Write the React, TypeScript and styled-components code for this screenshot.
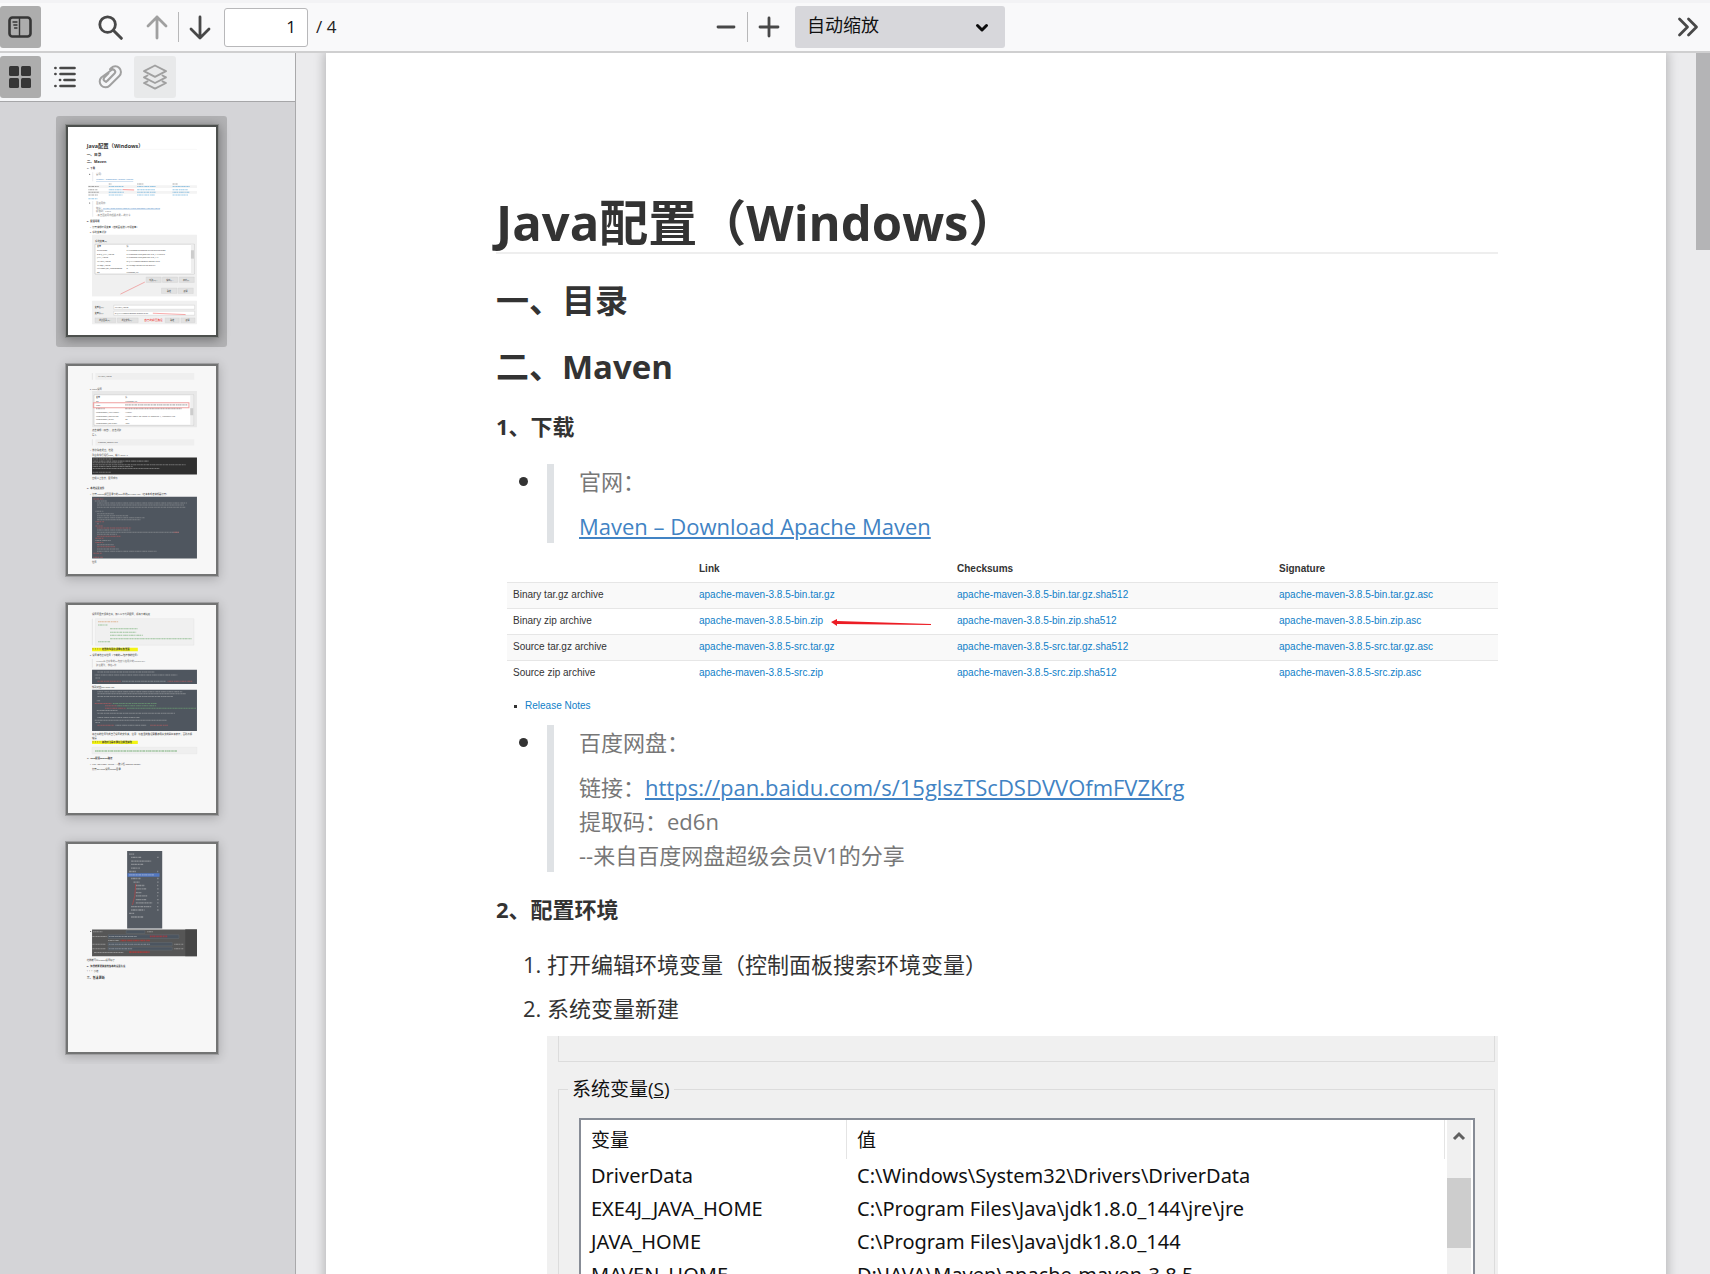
import React from "react";
import styled, { createGlobalStyle } from "styled-components";

const GlobalStyle = createGlobalStyle`
  *, *::before, *::after { box-sizing: border-box; }
  body {
    margin: 0;
    overflow: hidden;
    font-family: "Open Sans", "Noto Sans CJK SC", sans-serif;
    color: #333;
  }
  button, input, select { font: inherit; color: inherit; }
`;

/* ---------- shell ---------- */

const Shell = styled.div`
  display: flex;
  flex-direction: column;
  height: 100vh;
  background: #ebebed;
`;

const Toolbar = styled.header`
  display: grid;
  grid-template-columns: 1fr auto 1fr;
  align-items: center;
  flex: none;
  height: 53px;
  background: #f9f9fa;
  border-top: 3px solid #f3f3f5;
  border-bottom: 2px solid #cfcfd0;
`;

const ToolGroup = styled.div<{ $end?: boolean }>`
  display: flex;
  align-items: center;
  justify-content: ${(p) => (p.$end ? "flex-end" : "flex-start")};
  padding-right: ${(p) => (p.$end ? 1 : 0)}px;
`;

const IconButton = styled.button<{ $tone?: "on" | "hover"; $dim?: boolean }>`
  display: flex;
  align-items: center;
  justify-content: center;
  width: ${(p) => (p.$tone === "on" ? 41 : 42)}px;
  height: 42px;
  padding: 0 ${(p) => (p.$tone === "on" ? 2 : 0)}px 0 0;
  border: 0;
  border-radius: 3px;
  color: ${(p) => (p.$dim ? "#a0a0a0" : p.$tone === "on" ? "#363636" : "#484848")};
  background: ${(p) =>
    p.$tone === "on" ? "#adadad" : p.$tone === "hover" ? "#e8e9ea" : "transparent"};
`;

const Gap = styled.span<{ $w: number }>`
  width: ${(p) => p.$w}px;
`;

const Divider = styled.span`
  width: 1px;
  height: 30px;
  background: #b8b8b9;
`;

const PageField = styled.input`
  width: 84px;
  height: 39px;
  margin-left: 3px;
  padding: 0 11px 2px;
  border: 1px solid #b8b8ba;
  border-radius: 3px;
  background: #fff;
  color: #111;
  font-size: 17px;
  text-align: right;
`;

const PageTotal = styled.span`
  margin-left: 8px;
  padding-bottom: 2px;
  font-size: 17px;
  color: #222;
`;

const SelectWrap = styled.div`
  position: relative;
  margin-left: 5px;
  svg {
    position: absolute;
    right: 16px;
    top: 17px;
    pointer-events: none;
  }
`;

const ZoomSelect = styled.select`
  display: block;
  appearance: none;
  width: 210px;
  height: 42px;
  padding: 0 12px 4px;
  border: 0;
  border-radius: 3px;
  background: #d7d7db;
  color: #111;
  font-size: 18px;
`;

const Body = styled.div`
  display: flex;
  flex: 1;
  min-height: 0;
`;

/* ---------- sidebar ---------- */

const Sidebar = styled.aside`
  display: flex;
  flex-direction: column;
  flex: none;
  width: 296px;
  border-right: 1px solid #a9a9ab;
  background: #d4d4d7;
`;

const SideTabs = styled.nav`
  display: flex;
  align-items: center;
  gap: 3px;
  flex: none;
  height: 49px;
  border-bottom: 1px solid #a6a6a8;
  background: #f5f6f8;
`;

const ThumbList = styled.div`
  display: flex;
  flex-direction: column;
  align-items: center;
  gap: 8px;
  padding: 14px 12px 0 0;
  overflow: hidden;
`;

const Thumb = styled.button<{ $active?: boolean }>`
  flex: none;
  width: 171px;
  height: 231px;
  padding: 8px 8px 9px 9px;
  border: 0;
  border-radius: 3px;
  background: ${(p) => (p.$active ? "#b2b2b4" : "transparent")};
  svg {
    display: block;
    width: 100%;
    height: 100%;
    border: 3px solid ${(p) => (p.$active ? "#4d504e" : "#737474")};
    outline: 1px solid ${(p) => (p.$active ? "#888a89" : "#a0a0a2")};
    outline-offset: -1px;
    background: ${(p) => (p.$active ? "#fff" : "#f7f7f7")};
    box-shadow: 0 2px 10px ${(p) => (p.$active ? "rgba(0,0,0,.35)" : "rgba(0,0,0,.2)")};
  }
`;

/* ---------- document ---------- */

const Viewer = styled.main`
  flex: 1;
  min-width: 0;
  padding: 0 30px;
  overflow: hidden;
`;

const ScrollTrack = styled.div`
  flex: none;
  width: 14px;
  background: #ebebed;
`;

const ScrollThumb = styled.div`
  height: 197px;
  background: #b4b4b6;
`;

const Page = styled.article`
  padding: 139px 168px 0 170px;
  background: #fff;
  box-shadow: 0 0 10px 2px rgba(0, 0, 0, 0.22);
  font-size: 22px;
  line-height: 34px;
`;

const Title = styled.h1`
  margin: 0 0 27px;
  border-bottom: 2px solid #eee;
  font-size: 49px;
  line-height: 60px;
`;

const Heading = styled.h2`
  margin: 26px 0 22px;
  font-size: 33px;
  line-height: 40px;
`;

const SubHeading = styled.h3`
  margin: 20px 0 21px;
  font-size: 22px;
  line-height: 34px;
`;

const Bullets = styled.ul`
  margin: 0;
  padding: 0 0 0 23px;
  list-style: none;
`;

const Bullet = styled.li`
  display: flex;
  gap: 19px;
  &::before {
    content: "";
    flex: none;
    width: 9px;
    height: 9px;
    margin-top: 13px;
    border-radius: 50%;
    background: #333;
  }
`;

const Quote = styled.blockquote`
  display: flex;
  flex-direction: column;
  gap: 11px;
  margin: 0;
  padding-left: 25px;
  border-left: 7px solid #dfe2e5;
  color: #777;
`;

const Para = styled.p`
  margin: 0;
`;

const DocLink = styled.a`
  color: #4183c4;
`;

const Downloads = styled.figure`
  height: 153px;
  margin: 13px 0 16px 11px;
  overflow: hidden;
  position: relative;
  font-family: "Liberation Sans", Arial, sans-serif;
  font-size: 10px;
  line-height: 16px;
`;

const DownloadTable = styled.table`
  width: 100%;
  table-layout: fixed;
  border-collapse: collapse;
  tr { height: 26px; }
  th, td { padding: 0 6px; text-align: left; white-space: nowrap; }
  tbody tr { border-top: 1px solid #e6e6e6; }
  tbody tr:nth-child(odd) { background: #f9f9f9; }
  a { color: #0f80c8; text-decoration: none; }
`;

const Col = styled.col<{ $w?: number }>`
  width: ${(p) => (p.$w ? `${p.$w}px` : "auto")};
`;

const Arrow = styled.svg`
  position: absolute;
  left: 323px;
  top: 60px;
`;

const Notes = styled.ul`
  display: flex;
  align-items: center;
  gap: 8px;
  margin: 12px 0 0;
  padding: 0 0 0 7px;
  list-style: none;
  a { color: #0f80c8; text-decoration: none; }
  &::before {
    content: "";
    width: 3px;
    height: 3px;
    background: #333;
  }
`;

const Steps = styled.ol`
  margin: 0;
  padding-left: 51px;
  li + li { margin-top: 10px; }
`;

/* ---------- environment variable dialog ---------- */

const Dialog = styled.div`
  margin-top: 11px;
  padding: 0 3px 0 11px;
  background: #f0f0f0;
  color: #111;
  font-size: 19px;
  line-height: 26px;
`;

const UpperBox = styled.div`
  height: 26px;
  border: 1px solid #dcdcdc;
  border-top: 0;
`;

const Group = styled.fieldset`
  min-width: 0;
  margin: 14px 0 0;
  padding: 16px 19px 60px 20px;
  border: 1px solid #dcdcdc;
  legend { margin-left: -11px; padding: 0 4px; }
`;

const ListBox = styled.div`
  display: flex;
  border: 2px solid #878c96;
  background: #fff;
`;

const VarTable = styled.table`
  flex: 1;
  table-layout: fixed;
  border-collapse: collapse;
  font-family: "Noto Sans", "Noto Sans CJK SC", sans-serif;
  th { height: 39px; font-size: 19px; font-weight: 400; box-shadow: inset -1px 0 #e4e4e4; }
  th, td { padding: 0 10px; text-align: left; white-space: nowrap; }
  td { height: 33px; font-size: 20px; }
`;

const InnerScroll = styled.div`
  display: flex;
  flex-direction: column;
  align-items: center;
  flex: none;
  width: 24px;
  margin: 0 2px;
  background: #f0f0f0;
  svg { margin: 10px 0 36px; }
`;

const InnerThumb = styled.div`
  width: 100%;
  height: 70px;
  background: #cdcdcd;
`;

/* ---------- icons ---------- */

const stroke = {
  fill: "none",
  stroke: "currentColor",
  strokeLinecap: "round" as const,
  strokeLinejoin: "round" as const,
};

const SidebarIcon = () => (
  <svg width="24" height="22" viewBox="0 0 24 22" {...stroke}>
    <rect x="1.5" y="1.5" width="21" height="19" rx="3" strokeWidth="2.6" />
    <path d="M11.5 2v18" strokeWidth="1.4" />
    <path d="M5 6h4M5.8 9h3.2M6.6 12H9" strokeWidth="1.3" />
  </svg>
);
const SearchIcon = () => (
  <svg width="25" height="25" viewBox="0 0 25 25" {...stroke}>
    <circle cx="9.6" cy="9.6" r="7.8" strokeWidth="2.8" />
    <path d="M15.5 15.5l7.8 7.8" strokeWidth="3" />
  </svg>
);
const ArrowIcon = ({ up }: { up?: boolean }) => (
  <svg width="22" height="25" viewBox="0 0 22 25" {...stroke} strokeWidth="2.8">
    <path d={up ? "M11 23V2M2 11l9-9 9 9" : "M11 2v21M2 14l9 9 9-9"} />
  </svg>
);
const MinusIcon = () => (
  <svg width="22" height="22" viewBox="0 0 22 22" {...stroke} strokeWidth="2.8">
    <path d="M3 11h16" />
  </svg>
);
const PlusIcon = () => (
  <svg width="22" height="22" viewBox="0 0 22 22" {...stroke} strokeWidth="2.8">
    <path d="M2 11h18M11 2v18" />
  </svg>
);
const MoreIcon = () => (
  <svg width="22" height="20" viewBox="0 0 22 20" {...stroke} strokeWidth="2.8">
    <path d="M2.5 2l8 8-8 8M11.5 2l8 8-8 8" />
  </svg>
);
const CaretIcon = () => (
  <svg width="14" height="10" viewBox="0 0 14 10" fill="none" stroke="#0c0c0d" strokeWidth="3" strokeLinecap="round" strokeLinejoin="round">
    <path d="M2.5 2.5L7 7l4.500-4.500" />
  </svg>
);
const GridIcon = () => (
  <svg width="22" height="22" viewBox="0 0 22 22" fill="currentColor">
    {[0, 12].map((x) => [0, 12].map((y) => <rect key={`${x}${y}`} x={x} y={y} width="10" height="10" rx="1.5" />))}
  </svg>
);
const OutlineIcon = () => (
  <svg width="22" height="22" viewBox="0 0 22 22" {...stroke} strokeWidth="2.7">
    <path d="M1.4 2h.1M6.5 2h14M1.4 8h.1M6.5 8h14M6 14h.1M10.5 14h10M1.4 20h.1M6.5 20h14" />
  </svg>
);
const ClipIcon = () => (
  <svg width="26" height="26" viewBox="0 0 26 26" {...stroke} strokeWidth="2">
    <path d="M9 18l8.500-8.500a2.300 2.300 0 0 0-3.300-3.300L4.300 13.500a5.800 5.800 0 0 0 8.200 8.200L22.300 12a5.600 5.600 0 0 0-8-8L13 5.300M17.500 9.500l-7 7.200a2.200 2.200 0 0 1-3.200-3.100l4.200-4.200" />
  </svg>
);
const LayersIcon = () => (
  <svg width="26" height="26" viewBox="0 0 26 26" {...stroke} strokeWidth="1.900">
    <path d="M13 1.500l11 5.700-11 5.700L2 7.200z" />
    <path d="M5.500 11.500L2 13.300 13 19l11-5.700-3.500-1.800" />
    <path d="M5.500 17.300L2 19l11 5.600L24 19l-3.500-1.700" />
  </svg>
);

/* ---------- thumbnail drawings ---------- */

type Line = [x: number, y: number, w: number, color?: string];

/* Greeked text: rows of short dashes standing for lines too small to read. */
const Greek = ({ lines, color, size = 4 }: { lines: Line[]; color: string; size?: number }) => (
  <g fill="none" strokeWidth={size}>
    {lines.map(([x, y, w, c], i) => (
      <path
        key={i}
        d={`M${x} ${y}h${w}`}
        stroke={c ?? color}
        strokeOpacity="0.42"
        strokeDasharray={["5 1 3 1 7 2", "3 1 8 1 4 2", "6 1 2 1 5 1"][i % 3]}
      />
    ))}
  </g>
);

const ThumbOne = () => (
  <svg viewBox="54 54 443 621" preserveAspectRatio="none" fill="#333" fontSize="7">
    <text x="110" y="116" fontSize="16" fontWeight="700">Java配置（Windows）</text>
    <path d="M110 121h330" stroke="#eee" />
    <text x="110" y="140" fontSize="11" fontWeight="700">一、目录</text>
    <text x="110" y="162" fontSize="11" fontWeight="700">二、Maven</text>
    <text x="110" y="180" fontWeight="700">1、下载</text>
    <circle cx="119" cy="195" r="1.5" />
    <path d="M128 189v27M128 275v47" stroke="#dfe2e5" strokeWidth="2" />
    <g fill="#777">
      <text x="138" y="197">官网：</text>
      <text x="138" y="213" fill="#4183c4" textDecoration="underline">Maven – Download Apache Maven</text>
      <text x="138" y="283">百度网盘：</text>
      <text x="138" y="298">链接：</text>
      <text x="159" y="298" fill="#4183c4" textDecoration="underline">https://pan.baidu.com/s/15glszTScDSDVVOfmFVZKrg</text>
      <text x="138" y="309">提取码：ed6n</text>
      <text x="138" y="319">--来自百度网盘超级会员V1的分享</text>
    </g>
    <circle cx="119" cy="281" r="1.5" />
    <path d="M114 228h326v8H114zM114 245h326v8H114z" fill="#f4f4f4" />
    <Greek size={3} color="#333" lines={[[176, 224, 8], [261, 224, 20], [367, 224, 16], [115, 232, 31], [115, 241, 27], [115, 249, 32], [115, 257, 28]]} />
    <Greek size={3} color="#0f80c8" lines={[[176, 232, 45], [176, 241, 41], [176, 249, 45], [176, 257, 41], [261, 232, 57], [261, 241, 53], [261, 249, 57], [261, 257, 53], [367, 232, 51], [367, 241, 46], [367, 249, 51], [367, 257, 46], [115, 268, 27]]} />
    <path d="M218 241l34 1" stroke="#e33" strokeWidth="1.5" />
    <text x="110" y="338" fontWeight="700">2、配置环境</text>
    <text x="119" y="355">1. 打开编辑环境变量（控制面板搜索环境变量）</text>
    <text x="119" y="370">2. 系统变量新建</text>
    <path d="M126 376h314v184H126z" fill="#f0f0f0" />
    <text x="135" y="397">系统变量(S)</text>
    <path d="M135 404h297v89H135z" fill="#fff" stroke="#999" />
    <path d="M422 405h9v88h-9z" fill="#eee" />
    <path d="M422 422h9v25h-9z" fill="#ccc" />
    <g fontSize="6">
      {[
        ["变量", "值"],
        ["DriverData", "C:\\Windows\\System32\\Drivers\\DriverData"],
        ["EXE4J_JAVA_HOME", "C:\\Program Files\\Java\\jdk1.8.0_144\\jre\\jre"],
        ["JAVA_HOME", "C:\\Program Files\\Java\\jdk1.8.0_144"],
        ["MAVEN_HOME", "D:\\JAVA\\Maven\\apache-maven-3.8.5"],
        ["MYSQL_HOME", "D:\\MySQL\\mysql-8.0.27-winx64"],
        ["NUMBER_OF_PROCESSORS", "8"],
        ["OS", "Windows_NT"],
      ].map(([k, v], i) => (
        <g key={k}>
          <text x="141" y={413 + i * 11}>{k}</text>
          <text x="229" y={413 + i * 11}>{v}</text>
        </g>
      ))}
      <path d="M288 502h45v16h-45zM337 502h45v16h-45zM387 502h45v16h-45zM334 535h46v16h-46zM384 535h45v16h-45z" fill="#e1e1e1" stroke="#ccc" />
      <text x="297" y="513">新建(W)...</text>
      <text x="348" y="513">编辑(I)...</text>
      <text x="398" y="513">删除(L)</text>
      <text x="350" y="546">确定</text>
      <text x="400" y="546">取消</text>
      <path d="M211 553l73-36" stroke="#e88" strokeWidth="2" />
      <path d="M126 561h314v12H126z" fill="#fff" />
      <path d="M126 573h314v70H126z" fill="#f0f0f0" />
      <path d="M191 586h242v12H191zM191 604h242v12H191z" fill="#fff" stroke="#bbb" />
      <text x="134" y="595">变量名(N):</text>
      <text x="194" y="595">MAVEN_HOME</text>
      <text x="134" y="613">变量值(V):</text>
      <text x="194" y="613">D:\JAVA\Maven\apache-maven-3.8.5</text>
      <path d="M308 610l98 4" stroke="#e55" strokeWidth="1.5" />
      <path d="M135 624h62v14h-62zM202 624h62v14h-62zM345 624h42v14h-42zM392 624h42v14h-42z" fill="#e1e1e1" stroke="#ccc" />
      <text x="147" y="634">浏览目录(D)...</text>
      <text x="214" y="634">浏览文件(F)...</text>
      <text x="360" y="634">确定</text>
      <text x="406" y="634">取消</text>
      <text x="282" y="632" fontSize="8" fill="#e22">自己的解压路径</text>
    </g>
  </svg>
);

const ThumbTwo = () => (
  <svg viewBox="54 33 443 621" preserveAspectRatio="none" fill="#444" fontSize="7">
    <path d="M136 54h296v20H136zM136 252h296v18H136z" fill="#efefef" />
    <path d="M127 54v20M127 252v18" stroke="#ddd" strokeWidth="2" />
    <text x="144" y="66" fontSize="6">MAVEN_HOME</text>
    <text x="119" y="104">3. path设置</text>
    <path d="M126 108h314v108H126z" fill="#e8e8e8" />
    <path d="M132 119h298v91H132z" fill="#fff" stroke="#aaa" />
    <path d="M420 119h9v91h-9z" fill="#eee" />
    <path d="M420 159h9v21h-9z" fill="#ccc" />
    <g fontSize="6">
      <text x="138" y="129">变量</text>
      <text x="225" y="129">值</text>
      <text x="138" y="140">OS</text>
      <text x="225" y="140">Windows_NT</text>
      <text x="138" y="151">Path</text>
      <text x="138" y="173">PROCESSOR_ARCHITECT...</text>
      <text x="225" y="173">AMD64</text>
      <text x="138" y="184">PROCESSOR_IDENTIFIER</text>
      <text x="225" y="184">AMD64 Family 23 Model 24 Stepping 1, AuthenticAMD</text>
      <text x="138" y="194">PROCESSOR_LEVEL</text>
      <text x="225" y="194">23</text>
      <text x="138" y="205">PROCESSOR_REVISION</text>
      <text x="225" y="205">1801</text>
    </g>
    <Greek color="#444" lines={[[225, 149, 186], [138, 160, 26], [225, 160, 170]]} />
    <path d="M130 143h286v15H130z" fill="none" stroke="#f0a0a0" strokeWidth="3" />
    <text x="126" y="228">点击编辑（双击），点击新建</text>
    <text x="126" y="242">写入</text>
    <text x="144" y="263" fontSize="6">%maven_home%\bin</text>
    <text x="119" y="286">4. 依次确定退出，检验</text>
    <text x="126" y="301">重启命令行运行cmd，输入 mvn -v</text>
    <path d="M126 306h314v51H126z" fill="#2f2f2f" />
    <Greek size={3} color="#ccc" lines={[[128, 311, 60], [128, 317, 167], [128, 322, 90], [128, 328, 278], [128, 333, 120], [128, 339, 200], [128, 350, 54]]} />
    <text x="126" y="369">出现以上信息，配置成功</text>
    <text x="110" y="401" fontWeight="700">3、本地设置文件</text>
    <text x="119" y="418">1. 打开Maven解压目录下的conf中的settings.xml（记事本或者编辑器打开）</text>
    <path d="M126 423h314v185H126z" fill="#4f565f" />
    <Greek size={3} color="#bbb" lines={[[134, 436, 36], [141, 442, 270], [141, 448, 260], [141, 455, 266], [136, 467, 24], [141, 474, 50], [141, 480, 95], [141, 486, 142], [141, 492, 130], [141, 504, 5], [141, 523, 100], [141, 529, 245], [141, 535, 60], [136, 554, 46], [141, 567, 50], [141, 579, 65], [141, 586, 178]]} />
    <Greek size={3} color="#f06060" lines={[[130, 430, 30], [136, 498, 26], [136, 511, 22], [141, 517, 102], [370, 529, 16], [141, 541, 70], [136, 547, 24], [136, 560, 24], [141, 573, 55], [130, 592, 26], [130, 604, 28]]} />
    <text x="126" y="620">位置</text>
  </svg>
);

const ThumbThree = () => (
  <svg viewBox="54 44 443 621" preserveAspectRatio="none" fill="#333" fontSize="7">
    <text x="126" y="75">设置阿里云镜像仓库，加入以下代码配置，提高下载速度</text>
    <path d="M136 85h295v79H136z" fill="#f0f0f0" stroke="#e2e2e2" />
    <path d="M127 85v79" stroke="#ddd" strokeWidth="2" />
    <Greek size={3} color="#2c882c" lines={[[144, 94, 60, "#c86820"], [144, 104, 28], [180, 115, 82], [180, 125, 78], [180, 134, 98], [180, 145, 244], [144, 154, 36]]} />
    <path d="M126 172h137v10H126zM126 449h137v10H126z" fill="#f4f414" />
    <text x="127" y="179" fontWeight="700">！！！！这里的位置在镜像标签里面</text>
    <text x="119" y="195">2. 设置本地仓库位置（下载的jar包存放的位置）</text>
    <path d="M127 205v26" stroke="#ddd" strokeWidth="2" />
    <g fill="#777">
      <text x="138" y="214">Maven从仓库拿的jar包默认在用户的repository</text>
      <text x="138" y="226">建议更改，放在D盘</text>
    </g>
    <path d="M126 237h314v43H126zM126 297h314v123H126z" fill="#4f565f" />
    <Greek size={3} color="#ccc" lines={[[142, 244, 172], [134, 253, 248], [136, 262, 14], [216, 272, 130], [142, 303, 254], [142, 309, 265], [142, 317, 226], [140, 330, 10], [140, 359, 62], [142, 367, 232], [142, 380, 126], [134, 388, 216], [136, 395, 14], [196, 403, 92]]} />
    <Greek size={3} color="#f06060" lines={[[142, 272, 70], [352, 272, 75], [134, 338, 50], [165, 345, 34], [165, 352, 62], [142, 403, 50], [300, 403, 53]]} />
    <Greek size={3} color="#80d080" lines={[[188, 338, 132], [200, 345, 118], [230, 352, 208]]} />
    <text x="126" y="292">找到对应settings.xml</text>
    <text x="126" y="432">将仓库的位置改成自己设置的文件夹，注意：标签里的路径需要使用英文的斜杠来表示，否则会报</text>
    <text x="126" y="444">错误</text>
    <text x="127" y="457" fontWeight="700">！！！！修改时注意不要在注释里修改</text>
    <path d="M126 469h314v19H126z" fill="#efefef" stroke="#e4e4e4" />
    <Greek color="#2c882c" lines={[[135, 480, 246]]} />
    <text x="110" y="504" fontWeight="700">4、idea配置Maven路径</text>
    <text x="119" y="522">1. File-&gt;settings-&gt;build...-&gt;搜索栏“maven home”</text>
    <text x="126" y="537">打开settings设置home目录</text>
  </svg>
);

const ThumbFour = () => (
  <svg viewBox="54 39 443 621" preserveAspectRatio="none" fill="#333" fontSize="7">
    <path d="M231 60h105v231H231z" fill="#555b63" />
    <path d="M232 126h96v11h-96z" fill="#5478c0" />
    <Greek color="#ddd" lines={[[237, 69, 15], [243, 79, 30], [243, 90, 60], [243, 100, 36], [243, 111, 26], [237, 121, 20], [237, 131, 76], [243, 142, 28], [250, 153, 18], [257, 163, 26], [257, 173, 31], [257, 184, 17], [257, 194, 34], [257, 205, 31], [257, 215, 49], [243, 226, 60], [243, 236, 40], [237, 246, 16], [243, 257, 38]]} />
    <Greek color="#ddd" lines={[79, 121, 142, 153, 163, 173, 184, 194, 205, 215, 226, 236].map((y): Line => [321, y, 4])} />
    <path d="M257 157l-3 36-7 28" stroke="#b44" fill="none" strokeWidth="2" />
    <circle cx="122" cy="300" r="1.5" />
    <path d="M126 294h314v80H126z" fill="#565656" />
    <path d="M405 294h35v80h-35z" fill="#464646" />
    <path d="M228 297h56v9h-56zM174 310h212v11H174zM174 333h192v10H174zM174 347h192v9H174z" fill="#4c5560" stroke="#707880" />
    <Greek size={3} color="#ddd" lines={[[129, 301, 28], [291, 301, 17], [127, 315, 44], [176, 315, 84], [174, 327, 33], [127, 338, 40], [176, 338, 124], [372, 338, 27], [127, 352, 40], [176, 352, 70], [372, 352, 27], [132, 363, 88]]} />
    <Greek size={5} color="#f22" lines={[[299, 315, 52], [211, 327, 89], [237, 362, 61]]} />
    <text x="110" y="387">这样就可以Maven设置好了</text>
    <text x="110" y="406" fontWeight="700">5、如果想要更换其他版本的设置方法</text>
    <text x="110" y="421">！！！小结</text>
    <text x="110" y="443" fontSize="9" fontWeight="700">三、暂未更新</text>
  </svg>
);

const thumbs = [ThumbOne, ThumbTwo, ThumbThree, ThumbFour];

/* ---------- data ---------- */

const archives = [
  ["Binary tar.gz archive", "bin.tar.gz"],
  ["Binary zip archive", "bin.zip"],
  ["Source tar.gz archive", "src.tar.gz"],
  ["Source zip archive", "src.zip"],
];

const variables = [
  ["DriverData", "C:\\Windows\\System32\\Drivers\\DriverData"],
  ["EXE4J_JAVA_HOME", "C:\\Program Files\\Java\\jdk1.8.0_144\\jre\\jre"],
  ["JAVA_HOME", "C:\\Program Files\\Java\\jdk1.8.0_144"],
  ["MAVEN_HOME", "D:\\JAVA\\Maven\\apache-maven-3.8.5"],
];

export default function App() {
  return (
    <Shell>
      <GlobalStyle />
      <Toolbar>
        <ToolGroup>
          <IconButton $tone="on" aria-label="切换侧栏"><SidebarIcon /></IconButton>
          <Gap $w={48} />
          <IconButton aria-label="查找"><SearchIcon /></IconButton>
          <Gap $w={5} />
          <IconButton $dim aria-label="上一页"><ArrowIcon up /></IconButton>
          <Divider />
          <IconButton aria-label="下一页"><ArrowIcon /></IconButton>
          <PageField aria-label="页面" defaultValue="1" />
          <PageTotal>/ 4</PageTotal>
        </ToolGroup>
        <ToolGroup>
          <IconButton aria-label="缩小"><MinusIcon /></IconButton>
          <Divider />
          <IconButton aria-label="放大"><PlusIcon /></IconButton>
          <SelectWrap>
            <ZoomSelect aria-label="缩放" defaultValue="auto">
              <option value="auto">自动缩放</option>
            </ZoomSelect>
            <CaretIcon />
          </SelectWrap>
        </ToolGroup>
        <ToolGroup $end>
          <IconButton aria-label="工具"><MoreIcon /></IconButton>
        </ToolGroup>
      </Toolbar>
      <Body>
        <Sidebar>
          <SideTabs>
            <IconButton $tone="on" aria-label="缩略图"><GridIcon /></IconButton>
            <IconButton aria-label="文档大纲"><OutlineIcon /></IconButton>
            <IconButton $dim aria-label="附件"><ClipIcon /></IconButton>
            <IconButton $dim $tone="hover" aria-label="图层"><LayersIcon /></IconButton>
          </SideTabs>
          <ThumbList>
            {thumbs.map((Drawing, i) => (
              <Thumb key={i} $active={i === 0} aria-label={`第 ${i + 1} 页`}>
                <Drawing />
              </Thumb>
            ))}
          </ThumbList>
        </Sidebar>
        <Viewer>
          <Page>
            <Title>Java配置（Windows）</Title>
            <Heading>一、目录</Heading>
            <Heading>二、Maven</Heading>
            <SubHeading>1、下载</SubHeading>
            <Bullets>
              <Bullet>
                <Quote>
                  <Para>官网：</Para>
                  <Para><DocLink href="#maven">Maven – Download Apache Maven</DocLink></Para>
                </Quote>
              </Bullet>
            </Bullets>
            <Downloads>
              <DownloadTable>
                <colgroup>
                  <Col $w={186} />
                  <Col $w={258} />
                  <Col $w={322} />
                  <Col />
                </colgroup>
                <thead>
                  <tr>
                    <th />
                    <th>Link</th>
                    <th>Checksums</th>
                    <th>Signature</th>
                  </tr>
                </thead>
                <tbody>
                  {archives.map(([name, file]) => (
                    <tr key={file}>
                      <td>{name}</td>
                      {["", ".sha512", ".asc"].map((ext) => (
                        <td key={ext}>
                          <a href={`#${file}${ext}`}>{`apache-maven-3.8.5-${file}${ext}`}</a>
                        </td>
                      ))}
                    </tr>
                  ))}
                </tbody>
              </DownloadTable>
              <Arrow width="102" height="12" viewBox="0 0 102 12">
                <path d="M1 6l6-3v2l94 3v1L7 8v2z" fill="#ec1c24" />
              </Arrow>
              <Notes>
                <li><a href="#notes">Release Notes</a></li>
              </Notes>
            </Downloads>
            <Bullets>
              <Bullet>
                <Quote>
                  <Para>百度网盘：</Para>
                  <Para>
                    链接：<DocLink href="#pan">https://pan.baidu.com/s/15glszTScDSDVVOfmFVZKrg</DocLink>
                    <br />
                    提取码：ed6n
                    <br />
                    --来自百度网盘超级会员V1的分享
                  </Para>
                </Quote>
              </Bullet>
            </Bullets>
            <SubHeading>2、配置环境</SubHeading>
            <Steps>
              <li>打开编辑环境变量（控制面板搜索环境变量）</li>
              <li>
                系统变量新建
                <Dialog>
                  <UpperBox />
                  <Group>
                    <legend>系统变量(<u>S</u>)</legend>
                    <ListBox>
                      <VarTable>
                        <colgroup>
                          <Col $w={266} />
                          <Col />
                        </colgroup>
                        <thead>
                          <tr>
                            <th>变量</th>
                            <th>值</th>
                          </tr>
                        </thead>
                        <tbody>
                          {variables.map(([name, value]) => (
                            <tr key={name}>
                              <td>{name}</td>
                              <td>{value}</td>
                            </tr>
                          ))}
                        </tbody>
                      </VarTable>
                      <InnerScroll>
                        <svg width="14" height="12" viewBox="0 0 14 12" fill="none" stroke="#606060" strokeWidth="3">
                          <path d="M2 9l5-5 5 5" />
                        </svg>
                        <InnerThumb />
                      </InnerScroll>
                    </ListBox>
                  </Group>
                </Dialog>
              </li>
            </Steps>
          </Page>
        </Viewer>
        <ScrollTrack>
          <ScrollThumb />
        </ScrollTrack>
      </Body>
    </Shell>
  );
}
